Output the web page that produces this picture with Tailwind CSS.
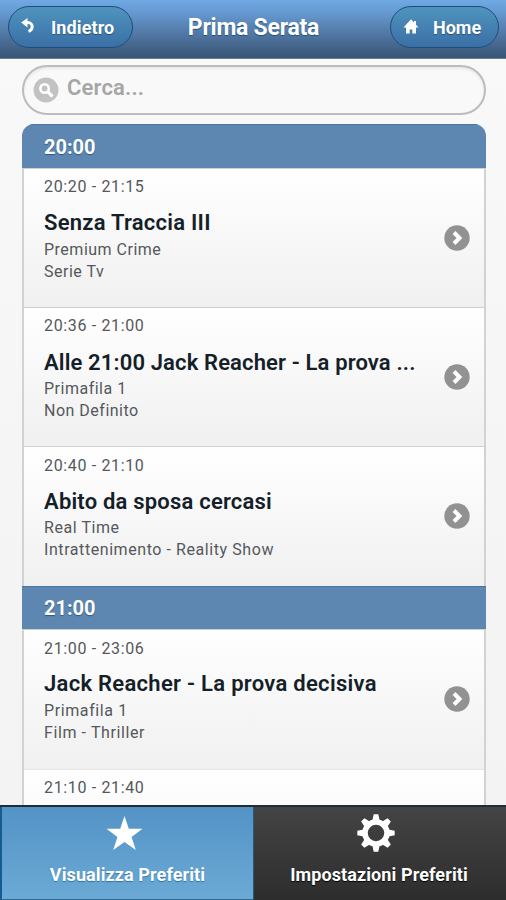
<!DOCTYPE html>
<html lang="it">
<head>
<meta charset="utf-8">
<title>Prima Serata</title>
<script src="https://cdn.jsdelivr.net/npm/@tailwindcss/browser@4"></script>
</head>
<body class="w-[506px] h-[900px] overflow-hidden flex flex-col bg-linear-to-b from-[#f9f9f9] to-[#f2f2f2] font-['Roboto',sans-serif] text-[#54585c]">
<header class="h-[59px] shrink-0 bg-linear-to-b from-[#6fa9e4] via-[#6496cd] via-25% to-[#3a5474] border-b border-[#6480a0] flex pl-[8px] pt-[6px] text-white text-shadow-[0_1px_1px_#254f7a]">
  <a class="w-[125px] h-[42px] rounded-full border-[1.500px] border-[#1d4f7c] bg-linear-to-b from-[#4f94bd] to-[#3b6fa6] flex items-center pl-[12px]">
    <svg class="size-[15px] mb-[3px]" viewBox="0 0 15 15" fill="none" stroke="#fff" stroke-width="3"><path d="M3.500 4.500h3.500a4.200 4.200 0 0 1 4.200 4.200c0 2.300-1.200 3.700-3.700 4.600"/><path d="M6.500 0v9.500L.2 4.500z" fill="#fff" stroke="none"/></svg>
    <span class="ml-[15px] text-[18px] font-bold tracking-[0.1px]">Indietro</span>
  </a>
  <h1 class="w-[241px] text-center text-[23px] leading-[43px] font-bold tracking-[-0.25px]">Prima Serata</h1>
  <a class="ml-[16px] w-[109px] h-[42px] rounded-full border-[1.500px] border-[#1d4f7c] bg-linear-to-b from-[#4f94bd] to-[#3b6fa6] flex items-center pl-[12px]">
    <svg class="size-[16px]" viewBox="0 0 16 16" fill="#fff"><path d="M8 .3.5 8.500H3v6h3.700V10.500h2.600v4H13v-6h2.500L13 5.700V2h-2v1.600z"/></svg>
    <span class="ml-[14px] text-[18px] font-bold">Home</span>
  </a>
</header>
<main class="flex-1 overflow-hidden pl-[22px] pr-5 pt-[6px]">
  <div class="h-[50px] rounded-full border-2 border-[#bcbcbc] bg-[#f9f9f9] shadow-[inset_0_2px_3px_rgba(0,0,0,.07)] flex items-center pl-[9px]">
    <svg class="size-[26px]" viewBox="0 0 26 26" fill="none"><circle cx="13" cy="13" r="12.500" fill="#c2c2c2"/><circle cx="11.600" cy="11.500" r="4.200" stroke="#fff" stroke-width="2.600"/><path d="m15 15 4.500 4.500" stroke="#fff" stroke-width="3.200"/></svg>
    <span class="ml-[8px] -mt-[5px] text-[22px] leading-[26px] font-semibold tracking-[0.15px] text-[#a6a6a6]">Cerca...</span>
  </div>
  <section class="mt-[9px] rounded-t-[12px] overflow-hidden">
    <h2 class="h-[44px] pl-[22px] bg-[#5d87b0] border-t border-[#4776a5] text-white text-[20px] leading-[44px] font-bold text-shadow-[0_1px_1px_#2c5885]">20:00</h2>
    <div class="border-x-2 border-[#d2d2d2]">
      <article class="h-[139px] border-t border-[#cfcfcf] bg-linear-to-b from-white to-[#f0f0f0] flex items-center justify-between pl-[20px] pr-[14px]">
        <div class="h-full pt-[7px]"><p class="text-[16px] leading-[22px] tracking-[0.65px]">20:20 - 21:15</p><h3 class="mt-[11px] text-[22px] leading-[28px] font-semibold tracking-[0.25px] text-[#142028]">Senza Traccia III</h3><p class="mt-[2px] text-[16px] leading-[21.500px] tracking-[0.5px]">Premium Crime<br>Serie Tv</p></div>
        <svg class="size-[26px]" viewBox="0 0 26 26"><circle cx="13" cy="13" r="12.700" fill="#929292"/><path d="m10 7.500 5.500 5.500-5.500 5.500" fill="none" stroke="#fff" stroke-width="4"/></svg>
      </article>
      <article class="h-[139px] border-t border-[#cfcfcf] bg-linear-to-b from-white to-[#f0f0f0] flex items-center justify-between pl-[20px] pr-[14px]">
        <div class="h-full pt-[7px]"><p class="text-[16px] leading-[22px] tracking-[0.65px]">20:36 - 21:00</p><h3 class="mt-[12px] text-[22px] leading-[28px] font-semibold tracking-[0.14px] text-[#142028]">Alle 21:00 Jack Reacher - La prova ...</h3><p class="mt-[1px] text-[16px] leading-[21.500px] tracking-[0.5px]">Primafila 1<br>Non Definito</p></div>
        <svg class="size-[26px]" viewBox="0 0 26 26"><circle cx="13" cy="13" r="12.700" fill="#929292"/><path d="m10 7.500 5.500 5.500-5.500 5.500" fill="none" stroke="#fff" stroke-width="4"/></svg>
      </article>
      <article class="h-[140px] border-t border-[#cfcfcf] bg-linear-to-b from-white to-[#f0f0f0] flex items-center justify-between pl-[20px] pr-[14px]">
        <div class="h-full pt-[8px]"><p class="text-[16px] leading-[22px] tracking-[0.65px]">20:40 - 21:10</p><h3 class="mt-[11px] text-[22px] leading-[28px] font-semibold tracking-[0.2px] text-[#142028]">Abito da sposa cercasi</h3><p class="mt-[1px] text-[16px] leading-[21.500px] tracking-[0.57px]">Real Time<br>Intrattenimento - Reality Show</p></div>
        <svg class="size-[26px] mb-[2px]" viewBox="0 0 26 26"><circle cx="13" cy="13" r="12.700" fill="#929292"/><path d="m10 7.500 5.500 5.500-5.500 5.500" fill="none" stroke="#fff" stroke-width="4"/></svg>
      </article>
    </div>
    <h2 class="h-[43px] pl-[22px] bg-[#5d87b0] border-t border-[#4776a5] text-white text-[20px] leading-[42px] font-bold text-shadow-[0_1px_1px_#2c5885]">21:00</h2>
    <div class="border-x-2 border-[#d2d2d2]">
      <article class="h-[140px] border-t border-[#cfcfcf] bg-linear-to-b from-white to-[#f0f0f0] flex items-center justify-between pl-[20px] pr-[14px]">
        <div class="h-full pt-[8px]"><p class="text-[16px] leading-[22px] tracking-[0.65px]">21:00 - 23:06</p><h3 class="mt-[10px] text-[22px] leading-[28px] font-semibold tracking-[0.29px] text-[#142028]">Jack Reacher - La prova decisiva</h3><p class="mt-[2px] text-[16px] leading-[21.500px] tracking-[0.6px]">Primafila 1<br>Film - Thriller</p></div>
        <svg class="size-[26px] mb-[2px]" viewBox="0 0 26 26"><circle cx="13" cy="13" r="12.700" fill="#929292"/><path d="m10 7.500 5.500 5.500-5.500 5.500" fill="none" stroke="#fff" stroke-width="4"/></svg>
      </article>
      <article class="h-[140px] border-t border-[#e4e4e4] bg-linear-to-b from-white to-[#f0f0f0] pl-[20px] pt-[7px]">
        <p class="text-[16px] leading-[22px] tracking-[0.65px]">21:10 - 21:40</p>
      </article>
    </div>
  </section>
</main>
<footer class="h-[95px] shrink-0 grid grid-cols-[253px_253px] border-t-2 border-[#222c34] text-white text-[18px] font-bold tracking-[0.1px]">
  <a class="bg-linear-to-b from-[#5393c6] to-[#6baad5] border-l-2 border-l-[#155d91] border-b border-b-[#326a96] flex flex-col items-center pt-[9px] text-shadow-[0_1px_1px_#3373a5]">
    <svg class="w-[37px] h-[35px] mr-[6px]" viewBox="0 0 37 35" fill="#fff"><path d="m18.500 0 4.300 12.800H36.500L25.600 20.900 29.800 34 18.500 26 7.200 34l4.200-13.100L.5 12.800h13.700z"/></svg>
    <span class="mt-[12px] leading-[24px]">Visualizza Preferiti</span>
  </a>
  <a class="bg-linear-to-b from-[#444] to-[#2d2d2d] border-l border-l-[#2a5878] flex flex-col items-center pt-[7px] pr-[2px] text-shadow-[0_1px_1px_#000]">
    <svg class="size-[38px] mr-[7px]" viewBox="-19 -19 38 38" fill="#fff"><circle r="11" fill="none" stroke="#fff" stroke-width="5.500"/><path id="tooth" d="M-3.600-12.500-2.300-18.700h4.600L3.600-12.500z"/><use href="#tooth" transform="rotate(45)"/><use href="#tooth" transform="rotate(90)"/><use href="#tooth" transform="rotate(135)"/><use href="#tooth" transform="rotate(180)"/><use href="#tooth" transform="rotate(225)"/><use href="#tooth" transform="rotate(270)"/><use href="#tooth" transform="rotate(315)"/></svg>
    <span class="mt-[11px] leading-[24px]">Impostazioni Preferiti</span>
  </a>
</footer>
</body>
</html>
